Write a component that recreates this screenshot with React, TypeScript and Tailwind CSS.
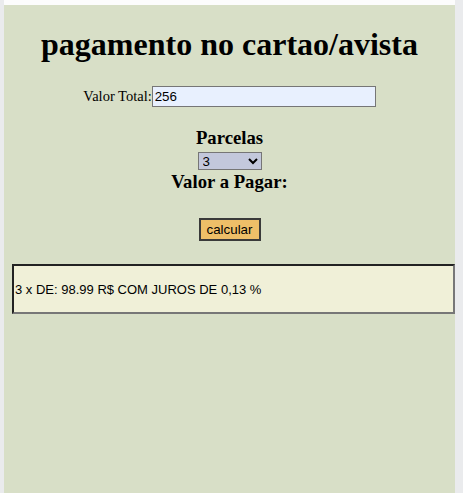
import { useState } from "react";

export default function App() {
  const [total, setTotal] = useState("256");
  const [parcelas, setParcelas] = useState("3");

  return (
    <div className="flex min-h-[493px] flex-col bg-[#eaebed] pl-1 pr-2">
      <div className="h-[5px] bg-[#fcfcfc]" />
      <div className="flex flex-1 flex-col items-center bg-[#d8dfc7] font-['Liberation_Serif',serif] text-black">
        <h1 className="mt-[21px] text-[32px] font-bold leading-[37px]">pagamento no cartao/avista</h1>

        <div className="mt-[23px] flex h-[21px] items-center text-[14.5px]">
          <label htmlFor="total">Valor Total:</label>
          <input
            id="total"
            value={total}
            onChange={(e) => setTotal(e.target.value)}
            className="h-[21px] w-[224px] border border-[#767676] bg-[#e8f0fe] px-[2px] font-['Liberation_Sans',sans-serif] text-[13.33px] outline-none"
          />
        </div>

        <h3 className="mt-[20px] text-[18.72px] font-bold leading-[22px]">Parcelas</h3>
        <select
          value={parcelas}
          onChange={(e) => setParcelas(e.target.value)}
          className="mt-[3px] h-[18px] w-[64px] border border-[#767676] bg-[#c3c8dc] font-['Liberation_Sans',sans-serif] text-[13.33px]"
        >
          <option value="1">1</option>
          <option value="2">2</option>
          <option value="3">3</option>
          <option value="4">4</option>
          <option value="5">5</option>
        </select>
        <h3 className="mt-[1px] text-[18.72px] font-bold leading-[22px]">Valor a Pagar:</h3>

        <button className="mt-[25px] h-[23px] w-[62px] border-2 border-[#3a3a3a] bg-[#eebf68] font-['Liberation_Sans',sans-serif] text-[13.33px] leading-none">
          calcular
        </button>

        <div className="mt-[23px] ml-[8px] flex h-[50px] items-center self-stretch border-2 border-t-[#222] border-l-[#222] border-r-[#777] border-b-[#777] bg-[#f0f0d8] pl-px pt-[2px] font-['Liberation_Sans',sans-serif] text-[13px]">
          {parcelas} x DE: 98.99 R$ COM JUROS DE 0,13 %
        </div>
      </div>
    </div>
  );
}
